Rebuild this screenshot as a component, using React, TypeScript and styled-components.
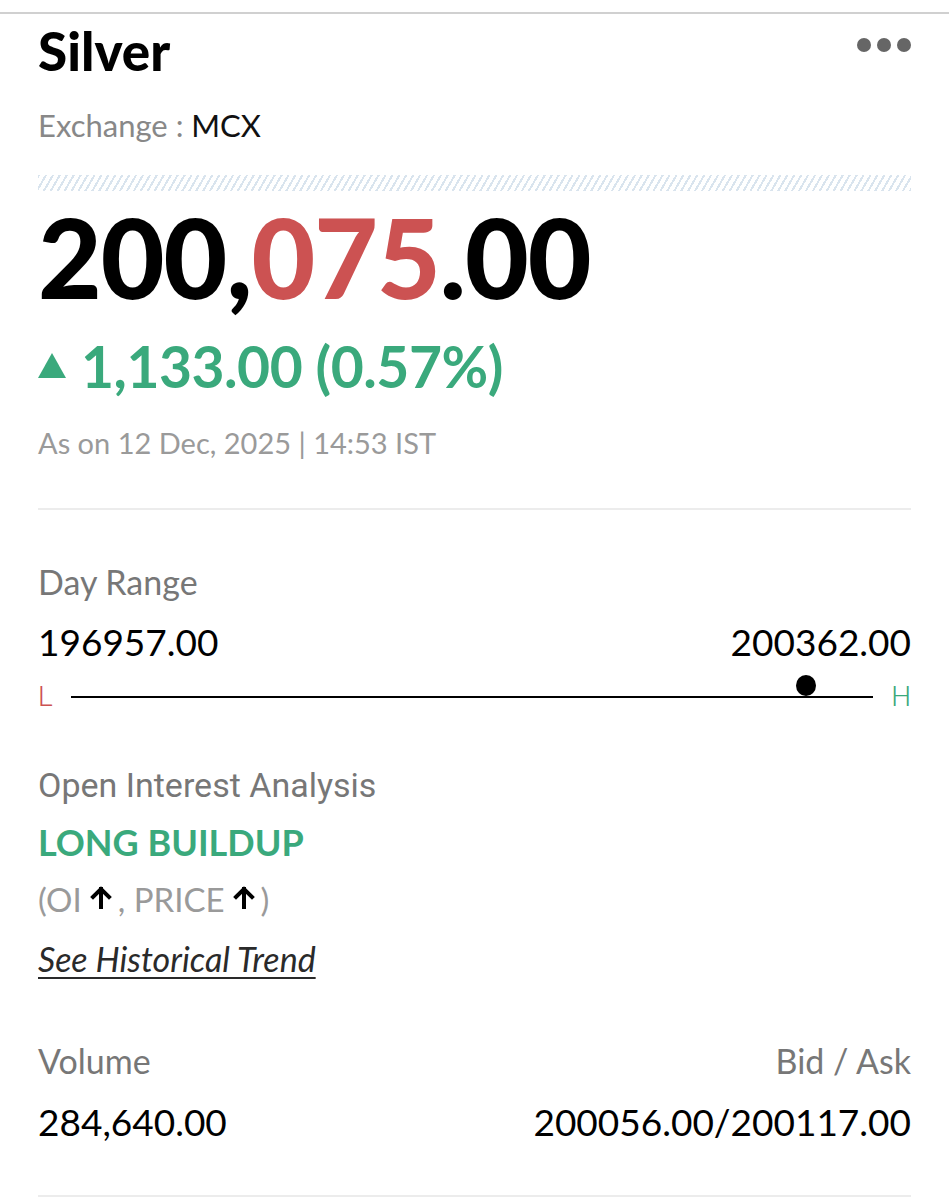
import styled, { createGlobalStyle } from "styled-components";

const GlobalStyle = createGlobalStyle`
  body {
    margin: 0;
    background: #ffffff;
    font-family: Lato, "Noto Sans", sans-serif;
  }
`;

const Page = styled.div`
  width: 949px;
  min-height: 1185px;
  border-top: 2px solid #d0d0d0;
  margin-top: 12px;
  padding: 0 38px;
  box-sizing: border-box;
`;

const Header = styled.div`
  display: flex;
  justify-content: space-between;
  align-items: flex-start;
  padding-top: 5px;
`;

const Title = styled.h1`
  margin: 0;
  font-size: 53px;
  font-weight: 900;
  line-height: 1.2;
  color: #000;
`;

const Dots = styled.div`
  display: flex;
  gap: 6px;
  margin-top: 19px;
`;

const Dot = styled.span`
  width: 14px;
  height: 14px;
  border-radius: 50%;
  background: #666;
`;

const Exchange = styled.div`
  margin-top: 24px;
  font-size: 31px;
  line-height: 1.2;
  color: #888;
  span {
    color: #111;
  }
`;

const Shimmer = styled.div`
  margin-top: 31px;
  height: 16px;
  background: repeating-linear-gradient(
    120deg,
    #d9e4ee 0px,
    #d9e4ee 2px,
    #ffffff 2px,
    #ffffff 6px
  );
`;

const Price = styled.div`
  margin-top: 5px;
  font-size: 110px;
  font-weight: 900;
  line-height: 1.1;
  color: #000;
  letter-spacing: -1px;
`;

const Red = styled.span`
  color: #cc5252;
`;

const Change = styled.div`
  display: flex;
  align-items: center;
  gap: 15px;
  margin-top: 15px;
  font-size: 57px;
  font-weight: 700;
  line-height: 1.2;
  color: #3aa97c;
  letter-spacing: -0.5px;
`;

const Triangle = styled.span`
  width: 0;
  height: 0;
  border-left: 14px solid transparent;
  border-right: 14px solid transparent;
  border-bottom: 25px solid #3aa97c;
`;

const Stamp = styled.div`
  margin-top: 26px;
  font-size: 29px;
  line-height: 1.2;
  color: #9a9a9a;
`;

const Divider = styled.hr<{ $top: number }>`
  border: none;
  border-top: 2px solid #ececec;
  margin: ${(p) => p.$top}px 0 0;
`;

const Label = styled.div<{ $top: number; $font?: string }>`
  margin-top: ${(p) => p.$top}px;
  font-family: ${(p) => p.$font || "Lato"}, sans-serif;
  font-size: 34px;
  line-height: ${(p) => (p.$font ? "40px" : "1.2")};
  color: #777;
`;

const LabelRow = styled.div<{ $top: number }>`
  display: flex;
  justify-content: space-between;
  margin-top: ${(p) => p.$top}px;
  font-size: 34px;
  line-height: 1.2;
  color: #777;
`;

const ValueRow = styled.div<{ $top: number }>`
  display: flex;
  justify-content: space-between;
  margin-top: ${(p) => p.$top}px;
  font-size: 37px;
  line-height: 1.2;
  color: #000;
`;

const RangeBar = styled.div`
  display: flex;
  align-items: center;
  gap: 18px;
  height: 24px;
  margin-top: 21px;
  font-family: Roboto, sans-serif;
  font-size: 28px;
  line-height: 24px;
`;

const RangeMark = styled.span<{ $color: string }>`
  color: ${(p) => p.$color};
  font-weight: 300;
`;

const Track = styled.div`
  position: relative;
  flex: 1;
  height: 2px;
  background: #000;
`;

const Knob = styled.span`
  position: absolute;
  top: -21px;
  width: 20px;
  height: 21px;
  margin-left: -10px;
  border-radius: 50%;
  background: #000;
`;

const Buildup = styled.div`
  margin-top: 16px;
  font-size: 36px;
  font-weight: 700;
  line-height: 1.2;
  color: #3aa97c;
`;

const Signals = styled.div`
  margin-top: 15px;
  height: 40px;
  font-size: 33px;
  line-height: 40px;
  color: #9a9a9a;
  display: flex;
  align-items: center;
`;

const Arrow = styled.svg`
  width: 22px;
  height: 24px;
  margin: 0 6px 4px 8px;
`;

const TrendBlock = styled.div`
  margin-top: 20px;
  font-size: 34px;
  line-height: 1.2;
`;

const TrendLink = styled.a`
  font-style: italic;
  color: #2a2a2a;
  text-decoration: underline;
  text-decoration-thickness: 2px;
  text-underline-offset: 5px;
`;

const UpArrow = () => (
  <Arrow viewBox="0 0 22 24">
    <path
      d="M11 22V4M3 12l8-8 8 8"
      stroke="#000"
      strokeWidth="4"
      strokeLinecap="square"
      fill="none"
    />
  </Arrow>
);

export default function App() {
  const low = 196957;
  const high = 200362;
  const ltp = 200075;
  const pos = ((ltp - low) / (high - low)) * 100;

  return (
    <>
      <GlobalStyle />
      <Page>
        <Header>
          <Title>Silver</Title>
          <Dots>
            <Dot />
            <Dot />
            <Dot />
          </Dots>
        </Header>
        <Exchange>
          Exchange : <span>MCX</span>
        </Exchange>
        <Shimmer />
        <Price>
          200,<Red>075</Red>.00
        </Price>
        <Change>
          <Triangle />
          1,133.00 (0.57%)
        </Change>
        <Stamp>As on 12 Dec, 2025 | 14:53 IST</Stamp>
        <Divider $top={47} />

        <Label $top={52}>Day Range</Label>
        <ValueRow $top={17}>
          <span>196957.00</span>
          <span>200362.00</span>
        </ValueRow>
        <RangeBar>
          <RangeMark $color="#cc5252">L</RangeMark>
          <Track>
            <Knob style={{ left: `${pos}%` }} />
          </Track>
          <RangeMark $color="#3aa97c">H</RangeMark>
        </RangeBar>

        <Label $top={56} $font="Roboto">
          Open Interest Analysis
        </Label>
        <Buildup>LONG BUILDUP</Buildup>
        <Signals>
          (OI
          <UpArrow />, PRICE
          <UpArrow />)
        </Signals>
        <TrendBlock>
          <TrendLink>See Historical Trend</TrendLink>
        </TrendBlock>

        <LabelRow $top={61}>
          <span>Volume</span>
          <span>Bid / Ask</span>
        </LabelRow>
        <ValueRow $top={18}>
          <span>284,640.00</span>
          <span>200056.00/200117.00</span>
        </ValueRow>
        <Divider $top={51} />
      </Page>
    </>
  );
}
